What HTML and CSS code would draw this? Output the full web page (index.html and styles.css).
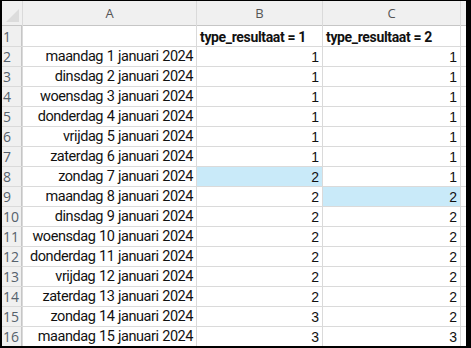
FILE: index.html
```html
<!DOCTYPE html>
<html lang="nl">
<head>
  <meta charset="UTF-8" />
  <title>Blad1</title>
  <link rel="stylesheet" href="styles.css">
</head>
<body>

<div class="sheet">
  <div class="grid head">
    <div class="corner"><span class="corner-tri"></span></div>
    <div class="col-head">A</div>
    <div class="col-head">B</div>
    <div class="col-head">C</div>
    <div class="col-head"></div>
  </div>
  <div class="grid first">
    <div class="row-head">1</div>
    <div class="cell"></div>
    <div class="cell bold">type_resultaat = 1</div>
    <div class="cell bold">type_resultaat = 2</div>
    <div class="cell"></div>
  </div>
  <div class="grid body" id="rows"></div>
</div>

<script>
  const days = ['maandag', 'dinsdag', 'woensdag', 'donderdag', 'vrijdag', 'zaterdag', 'zondag'];
  const colB = [1, 1, 1, 1, 1, 1, 2, 2, 2, 2, 2, 2, 2, 3, 3];
  const colC = [1, 1, 1, 1, 1, 1, 1, 2, 2, 2, 2, 2, 2, 2, 3];
  const rows = document.getElementById('rows');

  colB.forEach((b, i) => {
    const rowNr = i + 2;
    const day = i + 1;
    const selB = rowNr === 8 ? ' selected' : '';
    const selC = rowNr === 9 ? ' selected' : '';
    rows.innerHTML += `
      <div class="row-head">${rowNr}</div>
      <div class="cell date">${days[i % 7]} ${day} januari 2024</div>
      <div class="cell num${selB}">${b}</div>
      <div class="cell num${selC}">${colC[i]}</div>
      <div class="cell"></div>
    `;
  });
</script>

</body>
</html>
```

FILE: styles.css
```css
body {
  margin: 0;
  background: #000;
  height: 348px;
  overflow: hidden;
}

.sheet {
  margin: 1px 5px 0 2px;
  height: 345px;
  overflow: hidden;
  background: #fff;
  font-family: "Liberation Sans", Arial, sans-serif;
  color: #111;
}

.grid {
  display: grid;
  grid-template-columns: 20px 173px 125px 137px 1fr;
  grid-auto-rows: 19px;
  column-gap: 1px;
  row-gap: 1px;
  background: #dadada;
}

.grid > div {
  background: #fff;
  white-space: nowrap;
  overflow: hidden;
}

/* column letters */
.grid.head {
  grid-template-rows: 25px;
}

.corner,
.col-head {
  box-sizing: border-box;
  background: #f0f0f0 !important;
  border-bottom: 1px solid #c6c6c6;
}

.corner {
  position: relative;
}

.corner-tri {
  position: absolute;
  right: 3px;
  bottom: 3px;
  width: 0;
  height: 0;
  border-left: 13px solid transparent;
  border-bottom: 13px solid #dcdcdc;
}

.col-head {
  text-align: center;
  font-family: "Open Sans", sans-serif;
  font-size: 13px;
  line-height: 24px;
  color: #555;
}

/* header row 1 is a bit taller */
.grid.first {
  grid-template-rows: 20px;
  border-bottom: 1px solid #dadada;
}

.grid.first > div {
  line-height: 22px;
}

.row-head {
  background: #f0f0f0 !important;
  color: #56616c;
  font-family: "Open Sans", sans-serif;
  font-size: 14px;
  line-height: 20px;
  padding-left: 1px;
  box-shadow: inset -1px 0 #c6c6c6;
}

.cell {
  font-size: 14.5px;
  line-height: 20px;
  padding: 0 3px;
}

.date {
  text-align: right;
  font-family: "Roboto", sans-serif;
  letter-spacing: -0.45px;
  word-spacing: 0.5px;
}

.num {
  text-align: right;
  font-size: 14px;
}

.bold {
  font-family: "Roboto", sans-serif;
  font-weight: bold;
  font-size: 14px;
  letter-spacing: -0.35px;
}

.selected {
  background: #c9eaf9 !important;
}
```
